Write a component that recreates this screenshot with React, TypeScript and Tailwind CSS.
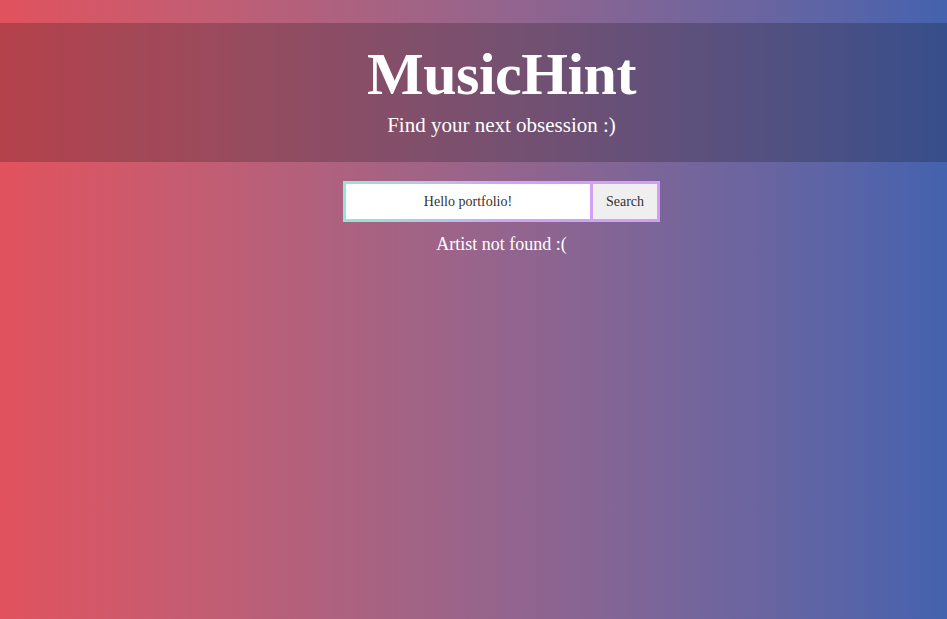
export default function App() {
  return (
    <div className="min-h-screen w-full bg-gradient-to-r from-[#e1525d] to-[#4462ae] pt-[23px] font-['Liberation_Serif',serif] text-white">
      <header className="flex h-[139px] flex-col items-center bg-black/20 pl-[56px] pt-[19px]">
        <h1 className="text-[60px] font-bold leading-[65px] tracking-[-0.5px]">MusicHint</h1>
        <p className="mt-[4px] text-[21px] leading-[28px]">Find your next obsession :)</p>
      </header>

      <main className="flex flex-col items-center pl-[56px] pt-[19px]">
        <div className="flex h-[41px] w-[317px] gap-[3px] bg-gradient-to-r from-[#8de8d2] via-[#c9a8f2] to-[#d79cf6] p-[3px]">
          <input
            defaultValue="Hello portfolio!"
            className="min-w-0 flex-1 bg-white text-center text-[14px] text-[#333] outline-none"
          />
          <button className="w-[64px] bg-[#efefef] text-[14px] text-[#333]">Search</button>
        </div>
        <p className="mt-[10px] text-[18px] leading-[24px]">Artist not found :(</p>
      </main>
    </div>
  );
}
